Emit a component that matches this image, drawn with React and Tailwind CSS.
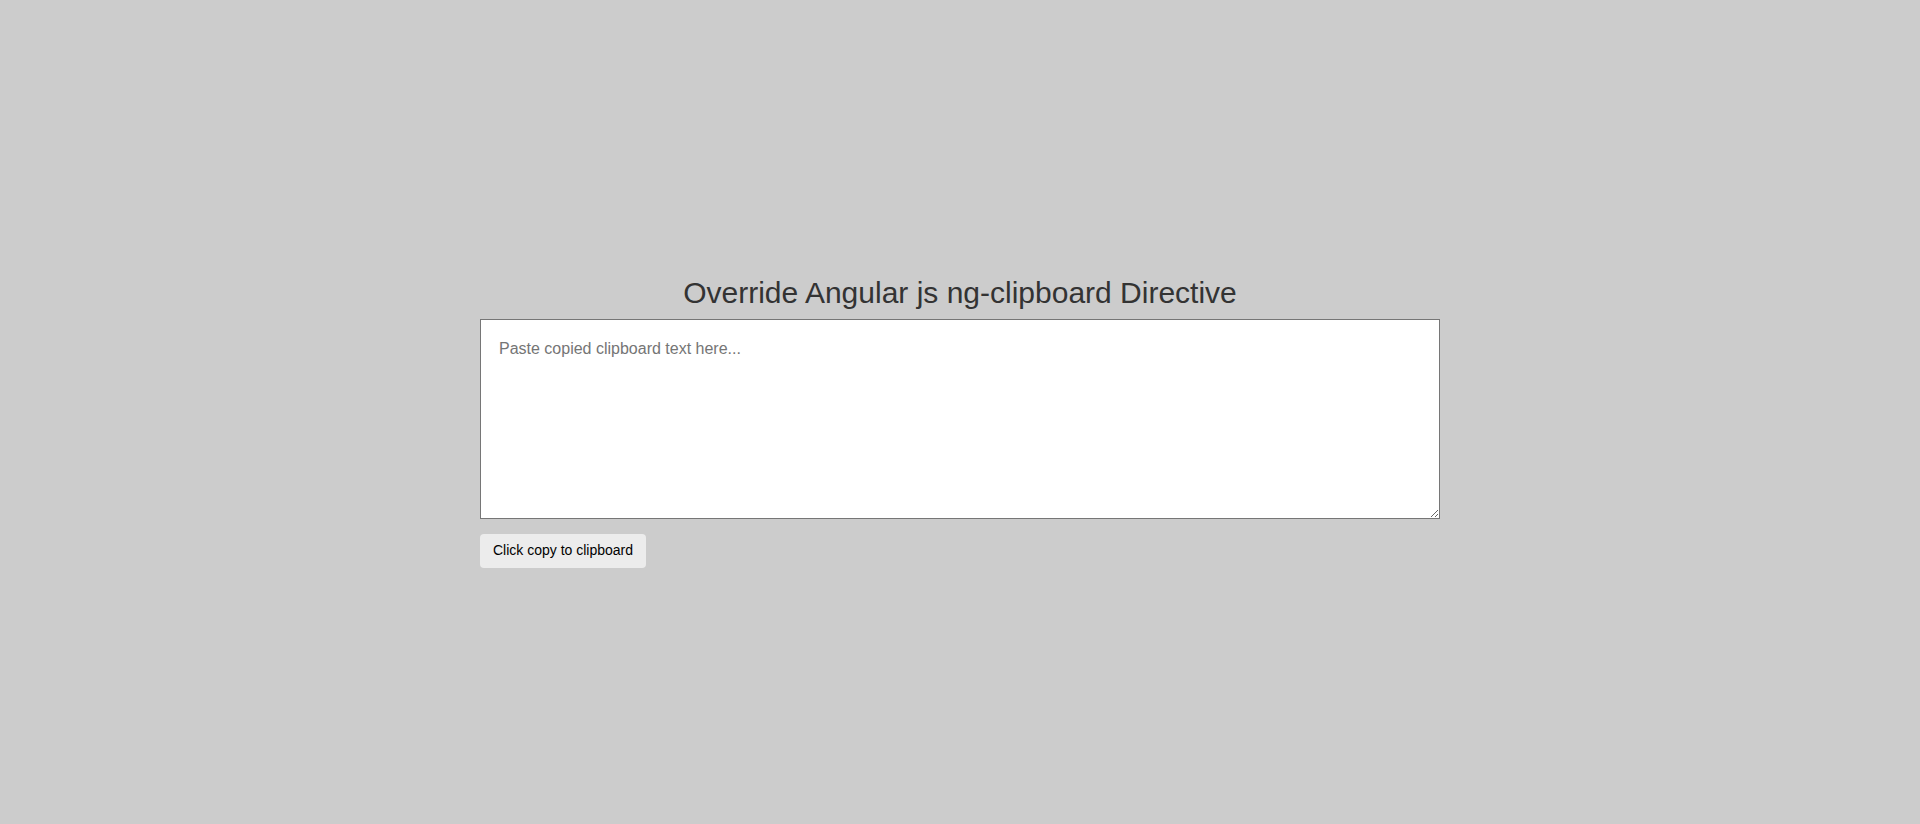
export default function App() {
  return (
    <div className="min-h-screen w-full bg-[#cccccc] flex flex-col items-center justify-center pb-[1px] font-['Liberation_Sans',Arial,sans-serif]">
      <div className="w-[960px] flex flex-col">
        <h2 className="mt-5 mb-2.5 text-[30px] leading-[1.1] text-center text-[#333333] font-normal">
          Override Angular js ng-clipboard Directive
        </h2>
        <textarea
          placeholder="Paste copied clipboard text here..."
          className="block w-full h-[200px] bg-white border border-[#767676] pl-[18px] pr-4 pt-[17px] text-base text-[#333333] placeholder:text-[#757575] outline-none resize-y font-['Liberation_Sans',Arial,sans-serif]"
        />
        <div className="mt-[15px]">
          <button className="h-[34px] px-[13px] rounded bg-[#ececec] text-sm text-black leading-[1.42857] font-['Liberation_Sans',Arial,sans-serif]">
            Click copy to clipboard
          </button>
        </div>
      </div>
    </div>
  );
}
